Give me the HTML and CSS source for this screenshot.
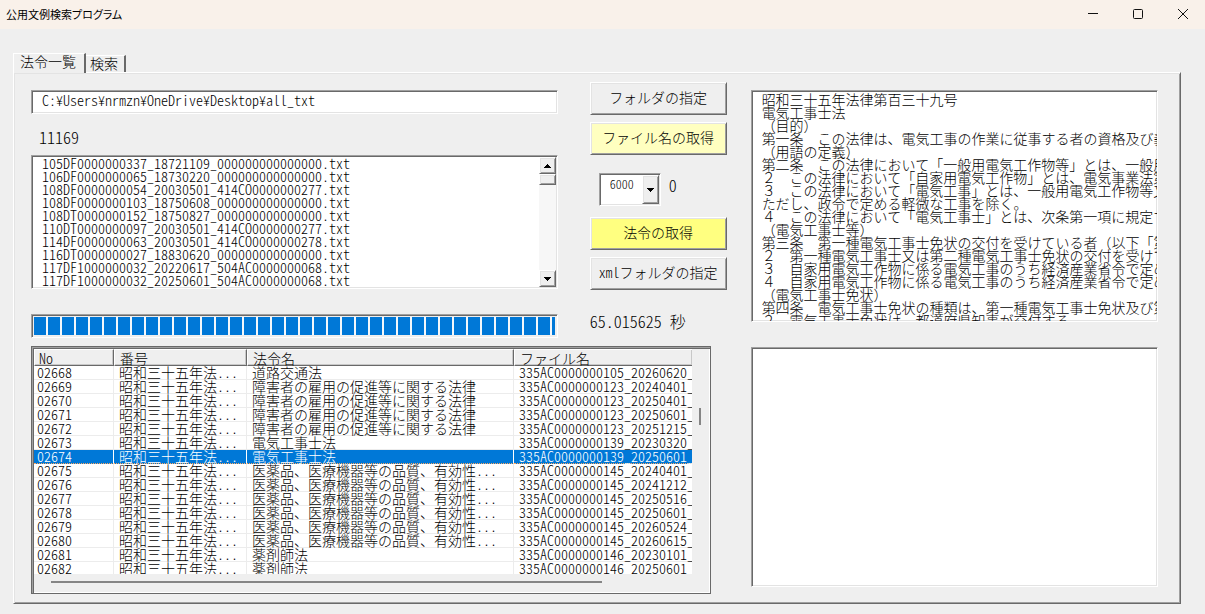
FILE: index.html
```html
<!DOCTYPE html>
<html lang="ja">
<head>
<meta charset="utf-8">
<title>公用文例検索プログラム</title>
<link rel="stylesheet" href="styles.css">
</head>
<body>
<header class="titlebar">
  <h1 class="title">公用文例検索プログラム</h1>
  <div class="window-buttons">
    <button class="window-button" aria-label="最小化"><svg width="12" height="12" viewBox="0 0 12 12"><path d="M1 5.5h10"/></svg></button>
    <button class="window-button" aria-label="最大化"><svg width="12" height="12" viewBox="0 0 12 12"><rect x="1.5" y="1.5" width="9" height="9" rx="1"/></svg></button>
    <button class="window-button" aria-label="閉じる"><svg width="12" height="12" viewBox="0 0 12 12"><path d="M1 1l10 10M11 1L1 11"/></svg></button>
  </div>
</header>
<main class="client">
  <div class="tabs" role="tablist">
    <button class="tab tab-active" role="tab" aria-selected="true">法令一覧</button>
    <button class="tab" role="tab" aria-selected="false">検索</button>
  </div>
  <section class="page" role="tabpanel">
    <div class="left">
      <div class="top">
        <div class="files">
          <input class="path sunken" type="text" aria-label="フォルダ" value="C:¥Users¥nrmzn¥OneDrive¥Desktop¥all_txt">
          <output class="count">11169</output>
          <div class="listbox sunken">
            <ul class="list" role="listbox" aria-label="ファイル名">
              <li>105DF0000000337_18721109_000000000000000.txt</li>
              <li>106DF0000000065_18730220_000000000000000.txt</li>
              <li>108DF0000000054_20030501_414CO0000000277.txt</li>
              <li>108DF0000000103_18750608_000000000000000.txt</li>
              <li>108DT0000000152_18750827_000000000000000.txt</li>
              <li>110DT0000000097_20030501_414CO0000000277.txt</li>
              <li>114DF0000000063_20030501_414CO0000000278.txt</li>
              <li>116DT0000000027_18830620_000000000000000.txt</li>
              <li>117DF1000000032_20220617_504AC0000000068.txt</li>
              <li>117DF1000000032_20250601_504AC0000000068.txt</li>
            </ul>
            <div class="scrollbar">
              <button class="scroll-button raised" aria-label="上へ"><svg width="7" height="4" viewBox="0 0 7 4"><path d="M3 0h1v1h1v1h1v1h1v1H0V3h1V2h1V1h1z"/></svg></button>
              <div class="scroll-thumb raised"></div>
              <button class="scroll-button scroll-down raised" aria-label="下へ"><svg width="7" height="4" viewBox="0 0 7 4"><path d="M0 0h7v1H6v1H5v1H4v1H3V3H2V2H1V1H0z"/></svg></button>
            </div>
          </div>
          <progress class="progress" value="100" max="100" aria-label="進行状況"></progress>
        </div>
        <div class="actions">
          <button class="action raised">フォルダの指定</button>
          <button class="action action-pale raised">ファイル名の取得</button>
          <div class="limit">
            <div class="combo sunken">
              <select class="combo-select" aria-label="件数"><option>6000</option></select>
              <span class="combo-arrow raised"><svg width="7" height="4" viewBox="0 0 7 4"><path d="M0 0h7v1H6v1H5v1H4v1H3V3H2V2H1V1H0z"/></svg></span>
            </div>
            <output class="limit-value">0</output>
          </div>
          <button class="action action-yellow raised">法令の取得</button>
          <button class="action raised">xmlフォルダの指定</button>
          <output class="elapsed">65.015625 秒</output>
        </div>
      </div>
      <div class="grid">
        <div class="grid-view">
          <table class="laws">
            <colgroup><col class="col-no"><col class="col-number"><col class="col-name"><col></colgroup>
            <thead><tr><th>No</th><th>番号</th><th>法令名</th><th>ファイル名</th></tr></thead>
            <tbody>
              <tr><td>02668</td><td>昭和三十五年法...</td><td>道路交通法</td><td>335AC0000000105_20260620_</td></tr>
              <tr><td>02669</td><td>昭和三十五年法...</td><td>障害者の雇用の促進等に関する法律</td><td>335AC0000000123_20240401_</td></tr>
              <tr><td>02670</td><td>昭和三十五年法...</td><td>障害者の雇用の促進等に関する法律</td><td>335AC0000000123_20250401_</td></tr>
              <tr><td>02671</td><td>昭和三十五年法...</td><td>障害者の雇用の促進等に関する法律</td><td>335AC0000000123_20250601_</td></tr>
              <tr><td>02672</td><td>昭和三十五年法...</td><td>障害者の雇用の促進等に関する法律</td><td>335AC0000000123_20251215_</td></tr>
              <tr><td>02673</td><td>昭和三十五年法...</td><td>電気工事士法</td><td>335AC0000000139_20230320_</td></tr>
              <tr class="selected"><td>02674</td><td>昭和三十五年法...</td><td>電気工事士法</td><td>335AC0000000139_20250601_</td></tr>
              <tr><td>02675</td><td>昭和三十五年法...</td><td>医薬品、医療機器等の品質、有効性...</td><td>335AC0000000145_20240401_</td></tr>
              <tr><td>02676</td><td>昭和三十五年法...</td><td>医薬品、医療機器等の品質、有効性...</td><td>335AC0000000145_20241212_</td></tr>
              <tr><td>02677</td><td>昭和三十五年法...</td><td>医薬品、医療機器等の品質、有効性...</td><td>335AC0000000145_20250516_</td></tr>
              <tr><td>02678</td><td>昭和三十五年法...</td><td>医薬品、医療機器等の品質、有効性...</td><td>335AC0000000145_20250601_</td></tr>
              <tr><td>02679</td><td>昭和三十五年法...</td><td>医薬品、医療機器等の品質、有効性...</td><td>335AC0000000145_20260524_</td></tr>
              <tr><td>02680</td><td>昭和三十五年法...</td><td>医薬品、医療機器等の品質、有効性...</td><td>335AC0000000145_20260615_</td></tr>
              <tr><td>02681</td><td>昭和三十五年法...</td><td>薬剤師法</td><td>335AC0000000146_20230101_</td></tr>
              <tr><td>02682</td><td>昭和三十五年法...</td><td>薬剤師法</td><td>335AC0000000146_20250601_</td></tr>
            </tbody>
          </table>
        </div>
        <div class="grid-vscroll"><div class="vthumb"></div></div>
        <div class="grid-hscroll"><div class="hthumb"></div></div>
      </div>
    </div>
    <div class="right">
      <textarea class="memo sunken" aria-label="法令本文" wrap="off" readonly>昭和三十五年法律第百三十九号
電気工事士法
（目的）
第一条　この法律は、電気工事の作業に従事する者の資格及び義務
（用語の定義）
第二条　この法律において「一般用電気工作物等」とは、一般用電気
２　この法律において「自家用電気工作物」とは、電気事業法第三
３　この法律において「電気工事」とは、一般用電気工作物等又は
ただし、政令で定める軽微な工事を除く。
４　この法律において「電気工事士」とは、次条第一項に規定する
（電気工事士等）
第三条　第一種電気工事士免状の交付を受けている者（以下「第一種
２　第一種電気工事士又は第二種電気工事士免状の交付を受けている
３　自家用電気工作物に係る電気工事のうち経済産業省令で定める
４　自家用電気工作物に係る電気工事のうち経済産業省令で定める
（電気工事士免状）
第四条　電気工事士免状の種類は、第一種電気工事士免状及び第二種
２　電気工事士免状は、都道府県知事が交付する。</textarea>
      <textarea class="memo memo-result sunken" aria-label="結果" wrap="off"></textarea>
    </div>
  </section>
</main>
</body>
</html>
```

FILE: styles.css
```css
* { box-sizing: border-box; }

body {
  margin: 0;
  min-height: 100vh;
  background: #efefef;
  color: #000;
  font-family: "Noto Sans CJK JP", sans-serif;
  font-size: 14px;
  font-weight: 300;
  line-height: 14px;
  font-feature-settings: "hwid";
}

button, input, select, textarea {
  margin: 0;
  font: inherit;
  font-feature-settings: inherit;
  color: inherit;
  border-radius: 0;
}

.sunken {
  border: 1px solid;
  border-color: #a0a0a0 #fff #fff #a0a0a0;
  box-shadow: inset 1px 1px #696969, inset -1px -1px #e3e3e3;
  background: #fff;
}

.raised {
  border: 1px solid;
  border-color: #fff #696969 #696969 #fff;
  box-shadow: inset 1px 1px #e3e3e3, inset -1px -1px #a0a0a0;
  background: #efefef;
}

.titlebar {
  display: flex;
  justify-content: space-between;
  align-items: center;
  height: 29px;
  padding: 0 0 2px 6px;
  background: #f9f1ea;
}

.title {
  margin: 0;
  font-size: 11px;
  font-weight: 400;
  font-feature-settings: "palt";
}

.window-buttons { display: flex; }

.window-button {
  display: flex;
  align-items: center;
  justify-content: center;
  width: 45px;
  height: 27px;
  padding: 0;
  border: 0;
  background: none;
}

.window-button svg { fill: none; stroke: #111; }

.client { padding: 24px 24px 8px 13px; }

.tabs {
  display: flex;
  align-items: flex-end;
}

.tab {
  height: 17px;
  padding: 0 6px 2px 4px;
  border: 1px solid #fff;
  border-right: 2px solid #696969;
  border-bottom: 0;
  border-left: 0;
  background: #efefef;
}

.tab-active {
  position: relative;
  height: 20px;
  margin-bottom: -1px;
  padding: 0 8px 6px 6px;
  border-left: 1px solid #fff;
}

.page {
  display: grid;
  grid-template-columns: minmax(0, 695fr) minmax(0, 407fr);
  gap: 24px;
  padding: 9px 22px 9px 17px;
  border: 1px solid;
  border-color: #fff #696969 #696969 #fff;
  box-shadow: inset 1px 1px #e3e3e3, inset -1px -1px #a0a0a0;
}

.top {
  display: grid;
  grid-template-columns: minmax(0, 1fr) 137px;
  gap: 32px;
}

.files {
  display: flex;
  flex-direction: column;
  padding-top: 8px;
}

.path {
  width: 100%;
  height: 24px;
  padding: 0 10px 4px;
}

.count {
  height: 18px;
  margin: 14px 0 9px 8px;
  font-size: 16px;
  line-height: 18px;
}

.listbox {
  display: flex;
  height: 134px;
  padding: 1px;
}

.list {
  flex: 1;
  margin: 0;
  padding: 0 9px;
  list-style: none;
  line-height: 13px;
}

.scrollbar {
  display: flex;
  flex-direction: column;
  width: 17px;
  background: #f7f7f7;
}

.scroll-button {
  display: flex;
  align-items: center;
  justify-content: center;
  height: 17px;
  padding: 0;
}

.scroll-down { margin-top: auto; }
.scroll-thumb { height: 11px; }

.progress {
  display: block;
  width: 100%;
  height: 24px;
  margin-top: 25px;
  padding: 2px;
  appearance: none;
  border: 1px solid;
  border-color: #a0a0a0 #fff #fff #a0a0a0;
  box-shadow: inset 1px 1px #696969;
}

.progress::-webkit-progress-bar { background: #f4f7fa; }

.progress::-webkit-progress-value {
  background: repeating-linear-gradient(90deg, #0078d7 0 12px, #f4f7fa 12px 14px);
}

.actions {
  display: flex;
  flex-direction: column;
  gap: 7px;
}

.action {
  height: 33px;
  padding: 0 0 3px;
}

.action-pale { background: #ffffc0; }
.action-yellow { background: #ffff80; }

.limit {
  display: flex;
  gap: 8px;
  margin: 11px 0 4px 9px;
}

.combo {
  position: relative;
  width: 62px;
  height: 33px;
  padding: 1px;
}

.combo-select {
  display: block;
  width: 100%;
  height: 29px;
  padding: 0 18px 12px 9px;
  appearance: none;
  border: 0;
  background: none;
  font-size: 12px;
}

.combo-arrow {
  position: absolute;
  top: 1px;
  right: 1px;
  bottom: 1px;
  display: flex;
  align-items: center;
  justify-content: center;
  width: 17px;
  pointer-events: none;
}

.limit-value, .elapsed {
  font-size: 16px;
  line-height: 18px;
}

.limit-value { padding-top: 3px; }
.elapsed { margin-top: 15px; }

.grid {
  display: grid;
  grid-template-columns: minmax(0, 1fr) 17px;
  margin: 8px 16px 0 0;
  padding: 2px 1px 2px 2px;
  border: 1px solid #696969;
  box-shadow: inset 1px 1px #a0a0a0, inset 2px 2px #696969, inset -1px -1px #fff;
}

.grid-view {
  height: 225px;
  overflow: hidden;
  background: #fff;
}

.laws {
  width: 100%;
  table-layout: fixed;
  border-collapse: separate;
  border-spacing: 0;
}

.col-no { width: 80px; }
.col-number { width: 133px; }
.col-name { width: 267px; }

.laws th {
  height: 17px;
  padding: 0 5px;
  border: 1px solid;
  border-color: #fff #696969 #696969 #fff;
  box-shadow: inset -1px -1px #c8c8c8;
  background: #efefef;
  font-weight: 300;
  line-height: 14px;
  text-align: left;
}

.laws th:first-child { padding-left: 4px; }

.laws td {
  height: 14px;
  padding: 0 0 0 5px;
  border-right: 1px solid #ececec;
  border-bottom: 1px solid #ececec;
  line-height: 13px;
  white-space: nowrap;
}

.laws td:first-child { padding-left: 3px; }
.laws td:last-child, .laws th:last-child { border-right: 0; }

.laws .selected td {
  background: #0078d7;
  border-bottom: 1px dotted #ffa860;
  border-right-color: #fff;
  color: #fff;
}

.grid-vscroll { padding: 59px 0 0 7px; }

.vthumb {
  width: 2px;
  height: 17px;
  background: #858585;
}

.grid-hscroll { padding: 7px 90px 8px 17px; }

.hthumb {
  height: 2px;
  background: #858585;
}

.right {
  display: flex;
  flex-direction: column;
  gap: 25px;
  padding-top: 8px;
}

.memo {
  display: block;
  width: 100%;
  height: 232px;
  padding: 2px 10px;
  font-feature-settings: normal;
  line-height: 13px;
  white-space: pre;
  resize: none;
  overflow: hidden;
}

.memo-result { height: 240px; }
```
